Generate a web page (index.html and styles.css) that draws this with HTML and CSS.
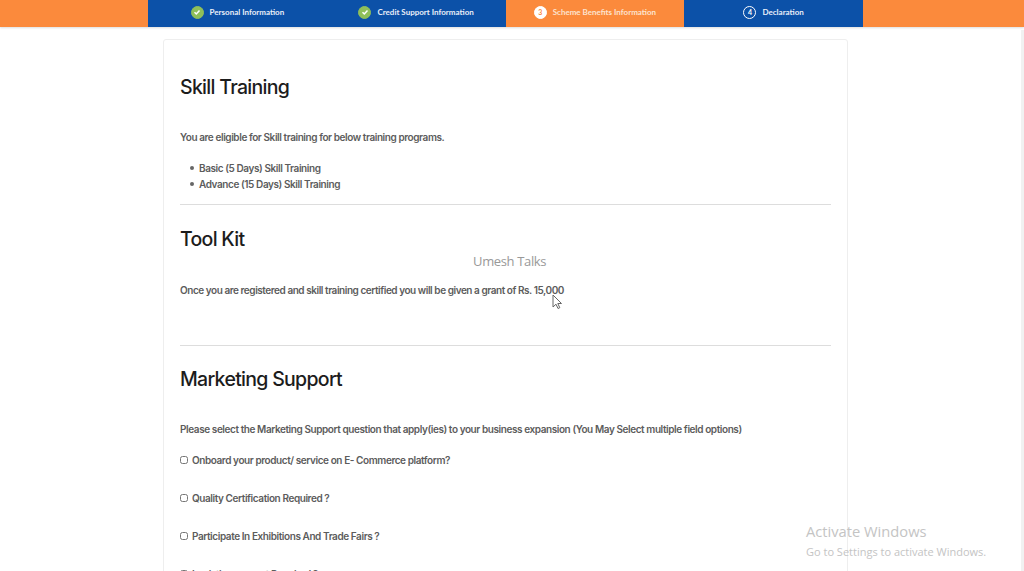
FILE: index.html
```html
<!DOCTYPE html>
<html lang="en">
<head>
  <meta charset="UTF-8">
  <title>Scheme Benefits Information</title>
  <link rel="stylesheet" href="styles.css">
</head>
<body>
  <div class="stepbar">
    <div class="steps">
      <div class="step done">
        <span class="step-icon">
          <svg width="10" height="10" viewBox="0 0 10 10"><path d="M2.500 5.200 4.300 7 7.500 3.400" fill="none" stroke="#fff" stroke-width="1.500"/></svg>
        </span>
        Personal Information
      </div>
      <div class="step done">
        <span class="step-icon">
          <svg width="10" height="10" viewBox="0 0 10 10"><path d="M2.500 5.200 4.300 7 7.500 3.400" fill="none" stroke="#fff" stroke-width="1.500"/></svg>
        </span>
        Credit Support Information
      </div>
      <div class="step active"><span class="step-icon">3</span> Scheme Benefits Information</div>
      <div class="step"><span class="step-icon">4</span> Declaration</div>
    </div>
  </div>

  <div class="card">
    <h2 class="first">Skill Training</h2>
    <p class="intro">You are eligible for Skill training for below training programs.</p>
    <ul>
      <li>Basic (5 Days) Skill Training</li>
      <li>Advance (15 Days) Skill Training</li>
    </ul>
    <hr>
    <h2>Tool Kit</h2>
    <p class="grant">Once you are registered and skill training certified you will be given a grant of Rs. 15,000</p>
    <hr class="wide">
    <h2>Marketing Support</h2>
    <p class="question">Please select the Marketing Support question that apply(ies) to your business expansion (You May Select multiple field options)</p>
    <label class="check"><input type="checkbox"> Onboard your product/ service on E- Commerce platform?</label>
    <label class="check"><input type="checkbox"> Quality Certification Required ?</label>
    <label class="check"><input type="checkbox"> Participate In Exhibitions And Trade Fairs ?</label>
    <label class="check"><input type="checkbox"> Logistics support Required ?</label>
  </div>

  <div class="watermark">Umesh Talks</div>
  <svg class="cursor" width="10" height="16" viewBox="0 0 10 16"><path d="M1 1v12l3-2.800 2 4.300 1.800-.8-2-4.200H9.500z" fill="#fff" stroke="#666" stroke-width="1"/></svg>
  <div class="activate">
    <div class="activate-title">Activate Windows</div>
    <div class="activate-sub">Go to Settings to activate Windows.</div>
  </div>
  <div class="scroll-edge"></div>
</body>
</html>
```

FILE: styles.css
```css
html, body { height: 100%; overflow: hidden; }
body { margin: 0; background: #fff; font-family: "Inter", "Open Sans", sans-serif; color: #5c5c5c; }

.stepbar { background: #fb8a3c; height: 27px; display: flex; padding-left: 148px; box-shadow: 0 1px 2px #ddd; }
.steps { display: flex; width: 715px; }
.step { width: 179px; padding-bottom: 3px; box-sizing: border-box; display: flex; align-items: center; justify-content: center; gap: 6px; background: #0c51a8; color: #e8eef8; font-family: "Lato", sans-serif; font-size: 8px; font-weight: 700; }
.step.active { background: #fb8a3c; color: #fde3cf; }
.step-icon { width: 11px; height: 11px; border: 1px solid #fff; border-radius: 50%; display: flex; align-items: center; justify-content: center; font-size: 7px; color: #fff; }
.step.done .step-icon { background: #8fbf5a; border-color: #8fbf5a; }
.step.active .step-icon { background: #fff; color: #fb8a3c; }

.card { width: 651px; margin: 12px 0 0 163px; padding: 0 16px; border: 1px solid #eee; border-radius: 3px; height: 600px; }
h2 { margin: 0; font-size: 19.500px; line-height: 28px; font-weight: 500; color: #1c1c1c; letter-spacing: -0.7px; }
h2.first { margin-top: 33px; }
p { margin: 0; font-size: 10px; line-height: 14px; font-weight: 600; letter-spacing: -0.42px; }
.intro { margin-top: 29px; }
ul { margin: 16px 0 0; padding-left: 10px; list-style: none; font-size: 10px; line-height: 16px; font-weight: 600; letter-spacing: -0.42px; }
li { display: flex; align-items: center; gap: 5px; }
li::before { content: ""; width: 4px; height: 4px; border-radius: 50%; background: #666; }
hr { margin: 12px 0 20px; border: 0; border-top: 1px solid #ddd; }
hr.wide { margin: 48px 0 19px; }
.grant { margin-top: 30px; letter-spacing: -0.45px; }
.question { margin-top: 29px; }
.check { display: flex; align-items: center; gap: 4px; height: 14px; margin-top: 24px; font-size: 10px; font-weight: 600; letter-spacing: -0.42px; }
.question + .check { margin-top: 17px; }
.check input { margin: 0; width: 8px; height: 8px; }

.watermark { position: absolute; left: 473px; top: 252px; font-family: "Open Sans", sans-serif; font-size: 13px; letter-spacing: -0.35px; color: #999; }
.cursor { position: absolute; left: 552px; top: 294px; }
.activate { position: absolute; left: 806px; top: 521px; font-family: "Open Sans", sans-serif; color: #c4c4c4; }
.activate-title { font-size: 14.700px; line-height: 20px; }
.activate-sub { margin-top: 2px; font-size: 11px; line-height: 18px; }
.scroll-edge { position: absolute; right: 0; top: 30px; bottom: 0; width: 3px; background: #f1f1f1; }
```
